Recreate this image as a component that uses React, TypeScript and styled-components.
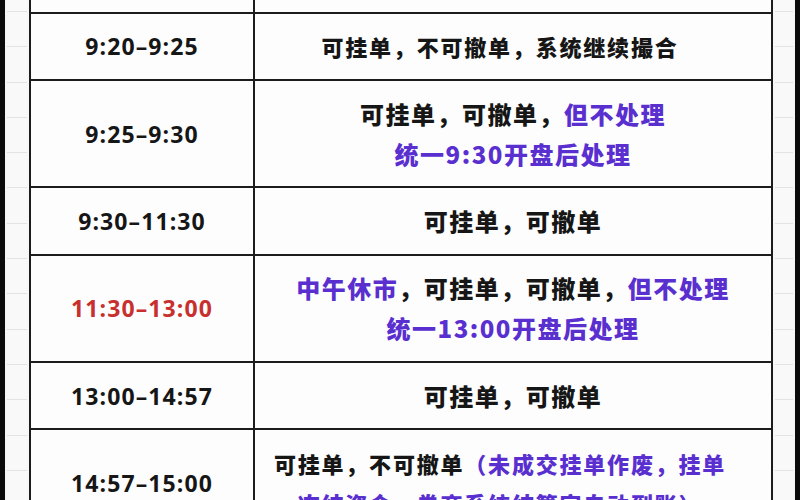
import { FC } from 'react'
import styled, { createGlobalStyle } from 'styled-components'

const GlobalStyle = createGlobalStyle`
  html, body {
    margin: 0;
    padding: 0;
    background: #f7f7f7;
    overflow: hidden;
  }
`

type Tone = 'black' | 'purple' | 'red'

const toneColor: Record<Tone, string> = {
  black: '#161616',
  purple: '#5a2fcf',
  red: '#c8302e',
}

interface Piece {
  text: string
  tone?: Tone
}

interface Row {
  time: string
  timeTone?: Tone
  tall?: boolean
  compact?: boolean
  lines: Piece[][]
}

const rows: Row[] = [
  { time: '9:15–9:20', lines: [[{ text: '可挂单，可撤单' }]] },
  { time: '9:20–9:25', compact: true, lines: [[{ text: '可挂单，不可撤单，系统继续撮合' }]] },
  {
    time: '9:25–9:30',
    tall: true,
    lines: [
      [{ text: '可挂单，可撤单，' }, { text: '但不处理', tone: 'purple' }],
      [{ text: '统一9:30开盘后处理', tone: 'purple' }],
    ],
  },
  { time: '9:30–11:30', lines: [[{ text: '可挂单，可撤单' }]] },
  {
    time: '11:30–13:00',
    timeTone: 'red',
    tall: true,
    lines: [
      [{ text: '中午休市', tone: 'purple' }, { text: '，可挂单，可撤单，' }, { text: '但不处理', tone: 'purple' }],
      [{ text: '统一13:00开盘后处理', tone: 'purple' }],
    ],
  },
  { time: '13:00–14:57', lines: [[{ text: '可挂单，可撤单' }]] },
  {
    time: '14:57–15:00',
    tall: true,
    compact: true,
    lines: [
      [{ text: '可挂单，不可撤单' }, { text: '（未成交挂单作废，挂单', tone: 'purple' }],
      [{ text: '冻结资金，券商系统结算完自动到账）', tone: 'purple' }],
    ],
  },
]

const Page = styled.div`
  display: flex;
  height: 500px;
  width: 800px;
  overflow: hidden;
`

const Edge = styled.div`
  width: 5px;
  flex: none;
  background: #0b0b0b;
`

const Gutter = styled.div<{ $w: number }>`
  width: ${p => p.$w}px;
  flex: none;
  padding: 0 2px;
  box-sizing: border-box;
  background-color: #f9f9f9;
  background-image: repeating-linear-gradient(
    to bottom,
    transparent 0,
    transparent 11px,
    #e3e3e3 11px,
    #e3e3e3 12px,
    transparent 12px,
    transparent 35.3px
  );
  background-clip: content-box;
`

const Sheet = styled.div`
  flex: 1;
  overflow: hidden;
`

const Table = styled.table`
  width: 100%;
  margin-top: -55.5px;
  border-collapse: collapse;
  background: #fdfdfd;
  table-layout: fixed;
`

const Tr = styled.tr<{ $tall?: boolean }>`
  height: ${p => (p.$tall ? 107.3 : 67.3)}px;
`

const TimeCell = styled.td<{ $tone: Tone }>`
  width: 220px;
  border: 2px solid #1c1c1c;
  text-align: center;
  vertical-align: middle;
  font-family: 'Open Sans', 'DejaVu Sans', sans-serif;
  font-weight: 700;
  font-size: 23px;
  letter-spacing: 1.1px;
  color: ${p => toneColor[p.$tone]};
`

const RuleCell = styled.td`
  border: 2px solid #1c1c1c;
  text-align: center;
  vertical-align: middle;
  padding: 0;
`

const Line = styled.div<{ $compact?: boolean }>`
  font-family: 'Noto Sans CJK SC', 'Noto Sans', sans-serif;
  font-weight: 900;
  font-size: ${p => (p.$compact ? 22 : 24)}px;
  line-height: 40px;
  letter-spacing: ${p => (p.$compact ? 1.8 : 1.5)}px;
  padding-right: ${p => (p.$compact ? 26 : 0)}px;
  white-space: nowrap;
`

const Span = styled.span<{ $tone: Tone }>`
  color: ${p => toneColor[p.$tone]};
`

const ScheduleTable: FC = () => (
  <Table>
    <tbody>
      {rows.map(row => (
        <Tr key={row.time} $tall={row.tall}>
          <TimeCell $tone={row.timeTone ?? 'black'}>{row.time}</TimeCell>
          <RuleCell>
            {row.lines.map((line, i) => (
              <Line key={i} $compact={row.compact}>
                {line.map((p, j) => (
                  <Span key={j} $tone={p.tone ?? 'black'}>{p.text}</Span>
                ))}
              </Line>
            ))}
          </RuleCell>
        </Tr>
      ))}
    </tbody>
  </Table>
)

const App: FC = () => (
  <>
    <GlobalStyle />
    <Page>
      <Edge />
      <Gutter $w={24} />
      <Sheet>
        <ScheduleTable />
      </Sheet>
      <Gutter $w={22} />
      <Edge />
    </Page>
  </>
)

export default App
